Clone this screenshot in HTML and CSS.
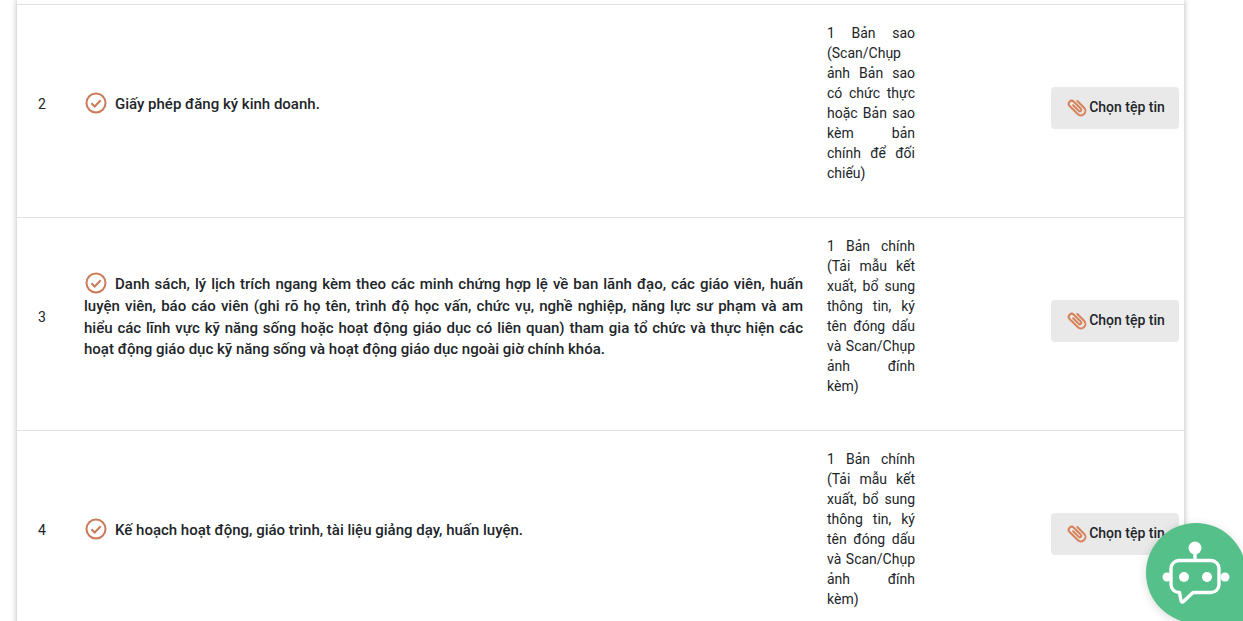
FILE: index.html
```html
<!DOCTYPE html>
<html lang="en">
<head>
    <meta charset="UTF-8">
    <meta name="viewport" content="width=device-width, initial-scale=1.0">
    <title>Hồ sơ đăng ký</title>
    <link rel="stylesheet" href="styles.css">
</head>
<body>
    <main class="card">
        <table class="docs">
            <colgroup>
                <col class="col-no">
                <col class="col-name">
                <col class="col-type">
                <col class="col-file">
            </colgroup>
            <tbody>
                <tr class="row-cut"><td colspan="4"></td></tr>
                <tr>
                    <td class="doc-no"><p>2</p></td>
                    <td class="doc-name">
                        <p><svg class="check" viewBox="0 0 22 22"><circle cx="11" cy="11" r="9.5"/><path d="M6.4 11.2l3.3 3.3 6-6.3"/></svg>Giấy phép đăng ký kinh doanh.</p>
                    </td>
                    <td class="doc-type"><p>1 Bản sao (Scan/Chụp ảnh Bản sao có chức thực hoặc Bản sao kèm bản chính để đối chiếu)</p></td>
                    <td class="doc-file">
                        <button class="file-btn"><svg class="clip" viewBox="0 0 24 24"><path transform="rotate(-45 12 12)" d="M16.5 8v9.5a4.5 4.5 0 0 1-9 0V6a3 3 0 0 1 6 0v10a1.5 1.5 0 0 1-3 0V8"/></svg>Chọn tệp tin</button>
                    </td>
                </tr>
                <tr>
                    <td class="doc-no"><p>3</p></td>
                    <td class="doc-name">
                        <p><svg class="check" viewBox="0 0 22 22"><circle cx="11" cy="11" r="9.5"/><path d="M6.4 11.2l3.3 3.3 6-6.3"/></svg>Danh sách, lý lịch trích ngang kèm theo các minh chứng hợp lệ về ban lãnh đạo, các giáo viên, huấn luyện viên, báo cáo viên (ghi rõ họ tên, trình độ học vấn, chức vụ, nghề nghiệp, năng lực sư phạm và am hiểu các lĩnh vực kỹ năng sống hoặc hoạt động giáo dục có liên quan) tham gia tổ chức và thực hiện các hoạt động giáo dục kỹ năng sống và hoạt động giáo dục ngoài giờ chính khóa.</p>
                    </td>
                    <td class="doc-type"><p>1 Bản chính (Tải mẫu kết xuất, bổ sung thông tin, ký tên đóng dấu và Scan/Chụp ảnh đính kèm)</p></td>
                    <td class="doc-file">
                        <button class="file-btn"><svg class="clip" viewBox="0 0 24 24"><path transform="rotate(-45 12 12)" d="M16.5 8v9.5a4.5 4.5 0 0 1-9 0V6a3 3 0 0 1 6 0v10a1.5 1.5 0 0 1-3 0V8"/></svg>Chọn tệp tin</button>
                    </td>
                </tr>
                <tr>
                    <td class="doc-no"><p>4</p></td>
                    <td class="doc-name">
                        <p><svg class="check" viewBox="0 0 22 22"><circle cx="11" cy="11" r="9.5"/><path d="M6.4 11.2l3.3 3.3 6-6.3"/></svg>Kế hoạch hoạt động, giáo trình, tài liệu giảng dạy, huấn luyện.</p>
                    </td>
                    <td class="doc-type"><p>1 Bản chính (Tải mẫu kết xuất, bổ sung thông tin, ký tên đóng dấu và Scan/Chụp ảnh đính kèm)</p></td>
                    <td class="doc-file">
                        <button class="file-btn"><svg class="clip" viewBox="0 0 24 24"><path transform="rotate(-45 12 12)" d="M16.5 8v9.5a4.5 4.5 0 0 1-9 0V6a3 3 0 0 1 6 0v10a1.5 1.5 0 0 1-3 0V8"/></svg>Chọn tệp tin</button>
                    </td>
                </tr>
            </tbody>
        </table>
    </main>

    <!-- Chat bot -->
    <button class="bot" aria-label="Chat bot">
        <svg viewBox="0 0 100 100">
            <circle class="fill" cx="49" cy="25" r="6.500"/>
            <circle class="fill" cx="21" cy="54" r="4.500"/>
            <circle class="fill" cx="79" cy="54" r="4.500"/>
            <circle class="fill" cx="38" cy="54" r="5"/>
            <circle class="fill" cx="61" cy="54" r="5"/>
            <path d="M49 31v6.500M33 37.500h32a8 8 0 0 1 8 8v16a8 8 0 0 1-8 8H47l-9.500 9q-2 1.500-2.500-1l-1.500-8H33a8 8 0 0 1-8-8v-16a8 8 0 0 1 8-8z"/>
        </svg>
    </button>
</body>
</html>
```

FILE: styles.css
```css
/* Global Styles */
html, body {
    height: 100%;
}

body {
    margin: 0;
    overflow: hidden;
    background: #fff;
    color: #212529;
    font-family: Roboto, "Liberation Sans", sans-serif;
    font-size: 14px;
    line-height: 20px;
}

p {
    margin: 0 0 16px;
}

/* Table Card */
.card {
    width: 1167px;
    margin-left: 17px;
    background: #fff;
    box-shadow: 0 0 6px rgba(0, 0, 0, 0.3);
}

.docs {
    width: 100%;
    table-layout: fixed;
    border-collapse: collapse;
}

.col-no {
    width: 67px;
}

.col-name {
    width: 743px;
}

.col-type {
    width: 112px;
}

.docs td {
    padding: 18px 0;
    border-bottom: 1px solid #dee2e6;
    vertical-align: middle;
}

.docs td.doc-no {
    padding-left: 21px;
}

.doc-no p {
    margin-bottom: 15px;
}

.docs .row-cut td {
    height: 4px;
    padding: 0;
}

/* Document name */
.docs td.doc-name {
    padding-right: 24px;
    font-size: 15px;
    font-weight: 500;
    line-height: 21.7px;
    text-align: justify;
}

.doc-name p {
    margin-bottom: 15px;
}

.check {
    width: 22px;
    height: 22px;
    margin: 0 8px 0 1px;
    vertical-align: -5px;
    fill: none;
    stroke: #c97b5a;
    stroke-width: 2;
}

/* Document type */
.docs td.doc-type {
    padding-right: 24px;
    text-align: justify;
}

/* File button */
.docs td.doc-file {
    padding-right: 5px;
    text-align: right;
}

.file-btn {
    display: inline-flex;
    align-items: center;
    justify-content: center;
    width: 128px;
    height: 42px;
    padding: 0 0 2px;
    margin-bottom: 6px;
    border: none;
    border-radius: 4px;
    background: #e9e9e9;
    color: #212529;
    font: 500 14px Roboto, "Liberation Sans", sans-serif;
}

.clip {
    width: 24px;
    height: 24px;
    fill: none;
    stroke: #d8825a;
    stroke-width: 2;
    stroke-linecap: round;
}

/* Chat bot */
.bot {
    position: fixed;
    left: 1146px;
    top: 523px;
    width: 100px;
    height: 100px;
    padding: 0;
    border: none;
    border-radius: 50% 50% 0 50%;
    background: #55c08a;
    box-shadow: 0 2px 10px rgba(0, 0, 0, 0.15);
}

.bot svg {
    display: block;
    width: 100px;
    height: 100px;
}

.bot path {
    fill: none;
    stroke: #fff;
    stroke-width: 3.400;
    stroke-linejoin: round;
    stroke-linecap: round;
}

.bot .fill {
    fill: #fff;
}
```
